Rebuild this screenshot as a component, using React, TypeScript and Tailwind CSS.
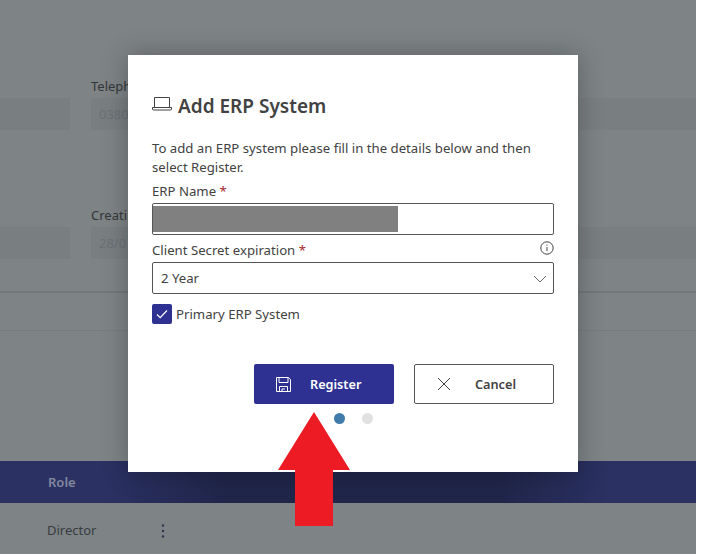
import React from "react";

const font = { fontFamily: '"Noto Sans", "Open Sans", sans-serif' };

function Background() {
  return (
    <div className="flex h-[554px] w-[696px] flex-col bg-[#7e8386]">
      <div className="flex h-[293px] flex-col border-b-2 border-[#73777a] pt-[77px]">
        <div className="flex h-[53px] gap-[21px]">
          <div className="mt-[21px] h-[32px] w-[70px] bg-[#797e81]"></div>
          <div className="flex flex-1 flex-col">
            <div className="h-[21px] text-[13px] leading-[18px] text-[#33373a]">Teleph</div>
            <div className="h-[32px] bg-[#797e81] pl-2 text-[13px] leading-[32px] text-[#6b7073]">0380</div>
          </div>
        </div>
        <div className="mt-[76px] flex h-[53px] gap-[21px]">
          <div className="mt-[21px] h-[32px] w-[70px] bg-[#797e81]"></div>
          <div className="flex flex-1 flex-col">
            <div className="h-[21px] text-[13px] leading-[18px] text-[#33373a]">Creati</div>
            <div className="h-[32px] bg-[#797e81] pl-2 text-[13px] leading-[32px] text-[#6b7073]">28/0</div>
          </div>
        </div>
      </div>
      <div className="h-[38px] border-b border-[#777b7e]"></div>
      <div className="h-[130px]"></div>
      <div className="flex h-[42px] items-center bg-[linear-gradient(90deg,#2b3163_15%,#20264a_32%,#20264a_72%,#2b3163_88%)] pl-[48px] pt-[2px] text-[13px] font-semibold text-[#82889f]">Role</div>
      <div className="flex h-[51px] items-center pl-[47px] pt-[5px] text-[13px] text-[#383c40]">
        <span className="w-[114px]">Director</span>
        <svg width="4" height="16" viewBox="0 0 4 16" fill="#30354f">
          <circle cx="2" cy="2.5" r="1.2" />
          <circle cx="2" cy="8" r="1.2" />
          <circle cx="2" cy="13.5" r="1.2" />
        </svg>
      </div>
    </div>
  );
}

function Modal() {
  return (
    <div className="absolute left-[128px] top-[55px] flex h-[417px] w-[450px] flex-col bg-white px-6 pt-[39px] shadow-[0_0_24px_rgba(0,0,0,0.28)]">
      <div className="flex h-[24px] items-center">
        <svg width="20" height="14" viewBox="0 0 20 14" fill="none" stroke="#424242" strokeWidth="1" className="mb-[4px] mr-[6px]">
          <path d="M2.5 0.5h15v10h-15z" />
          <path d="M0.5 10.5h19v1.5a1 1 0 0 1-1 1h-17a1 1 0 0 1-1-1z" />
        </svg>
        <span className="text-[19px] font-semibold text-[#424242]">Add ERP System</span>
      </div>
      <p className="mt-[21px] text-[13.2px] leading-[19px] text-[#424242]">
        To add an ERP system please fill in the details below and then select Register.
      </p>
      <label className="mt-[4px] block h-[22px] text-[13.2px] leading-[20px] text-[#424242]">
        ERP Name <span className="text-[#a4262c]">*</span>
      </label>
      <div className="h-[32px] w-[402px] rounded-[2px] border border-[#555555] py-[2px]">
        <div className="h-[26px] w-[245px] bg-[#808080]"></div>
      </div>
      <div className="mt-[5px] flex h-[22px] w-[402px] items-start justify-between text-[13.2px] leading-[20px] text-[#424242]">
        <span>
          Client Secret expiration <span className="text-[#a4262c]">*</span>
        </span>
        <svg width="14" height="14" viewBox="0 0 14 14" fill="none" stroke="#424242" className="mt-[1px]">
          <circle cx="7" cy="7" r="6.2" />
          <path d="M7 6v4.2" />
          <path d="M7 3.6v1" />
        </svg>
      </div>
      <div className="flex h-[32px] w-[402px] items-center justify-between rounded-[2px] border border-[#555555] pl-2 pr-[6px] pt-px text-[13.2px] text-[#424242]">
        <span>2 Year</span>
        <svg width="14" height="8" viewBox="0 0 14 8" fill="none" stroke="#6a6a6a">
          <path d="M1 1l6 6 6-6" />
        </svg>
      </div>
      <div className="mt-[10px] flex h-[20px] items-center gap-1 text-[13.2px] text-[#424242]">
        <span className="flex h-[20px] w-[20px] items-center justify-center rounded-[2px] bg-[#2e3192]">
          <svg width="12" height="10" viewBox="0 0 12 10" fill="none" stroke="#ffffff" strokeWidth="1.2">
            <path d="M1 5.5l3.2 3.2L11 1.5" />
          </svg>
        </span>
        <span className="pt-px">Primary ERP System</span>
      </div>
      <div className="mt-[40px] flex h-[40px] w-[402px] justify-end gap-5">
        <button className="flex h-[40px] w-[140px] items-center rounded-[2px] bg-[#2e3192] pl-[22px] text-[12.7px] font-semibold text-white">
          <svg width="15" height="15" viewBox="0 0 15 15" fill="none" stroke="#ffffff" strokeWidth="1" className="mr-[19px]">
            <path d="M0.5 0.5h12l2 2v12h-14z" />
            <path d="M3 0.5v5h9v-5" />
            <path d="M3.5 14.5v-5h8v5" />
            <path d="M6 14.5v-2.5h3" />
          </svg>
          <span className="pt-px">Register</span>
        </button>
        <button className="flex h-[40px] w-[140px] items-center rounded-[2px] border border-[#555555] bg-white pl-[22px] text-[12.7px] font-semibold text-[#424242]">
          <svg width="14" height="14" viewBox="0 0 14 14" fill="none" stroke="#424242" className="mr-[24px]">
            <path d="M1 1l12 12M13 1L1 13" />
          </svg>
          <span className="pt-px">Cancel</span>
        </button>
      </div>
      <div className="mt-[8px] flex h-[12px] w-[402px] items-center gap-[17px] pl-[182px]">
        <span className="h-[11px] w-[11px] rounded-full bg-[#3f7cac]"></span>
        <span className="h-[11px] w-[11px] rounded-full bg-[#e1e1e1]"></span>
      </div>
    </div>
  );
}

export default function App() {
  return (
    <div style={font} className="relative h-[554px] w-[705px] overflow-hidden bg-white">
      <Background />
      <Modal />
      <svg className="absolute left-[278px] top-[412px]" width="73" height="115" viewBox="0 0 73 115">
        <path d="M36 0L72 58H55V114H17V58H0Z" fill="#ed1c24" />
      </svg>
    </div>
  );
}
